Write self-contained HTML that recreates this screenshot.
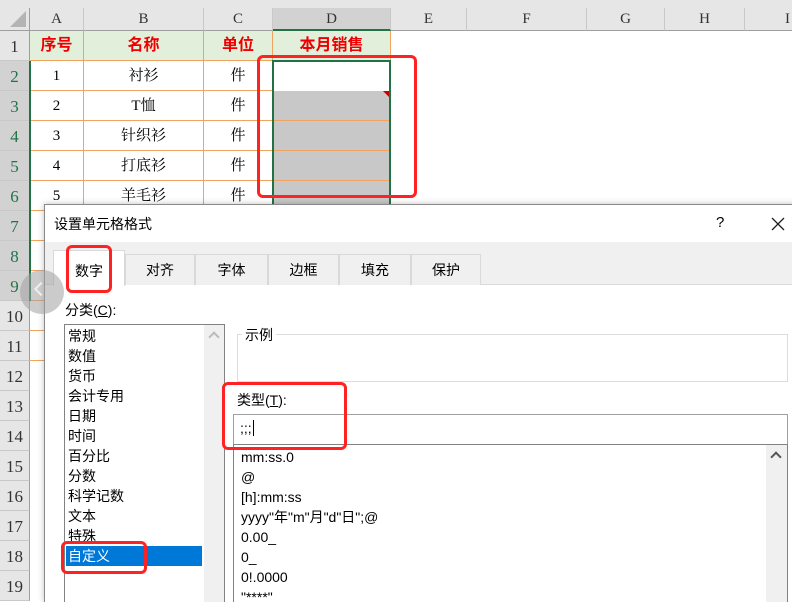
<!DOCTYPE html>
<html style="width:792px;height:602px;overflow:hidden"><head><meta charset="utf-8"><style>
*{margin:0;padding:0;box-sizing:border-box}
body{width:792px;height:602px;overflow:hidden;background:#fff;position:relative;font-family:"Liberation Sans","Noto Sans CJK SC",sans-serif;font-size:14px;color:#000}
.a{position:absolute}
.ch{top:8px;height:23px;background:#e6e6e6;border-right:1px solid #c8c8c8;border-bottom:1px solid #9e9e9e;text-align:center;font-family:"Liberation Serif","Noto Serif CJK SC",serif;font-size:15px;line-height:23px;color:#333}
.rh{left:0;width:30px;height:30px;background:#e6e6e6;border-bottom:1px solid #c8c8c8;border-right:1px solid #9e9e9e;text-align:center;font-family:"Liberation Serif",serif;font-size:17px;line-height:32px;color:#333}
.c{height:30px;border-right:1px solid #f0a45f;border-bottom:1px solid #f0a45f;text-align:center;line-height:30px;font-family:"Liberation Serif","Noto Serif CJK SC",serif;font-size:15px}
.h{background:#e2efda;color:#e00;font-weight:bold;font-size:16px;font-family:"Liberation Sans","Noto Sans CJK SC",sans-serif}
.g{background:#c8c8c8}
.red{border:3px solid #f22;border-radius:6px}
.tab{top:254px;height:31px;border:1px solid #d9d9d9;border-bottom:none;background:#f0f0f0;text-align:center;line-height:31px;font-size:14px}
.li{left:68px;font-size:14px;line-height:20px}
.ti{left:241px;font-size:14px;line-height:20px}
</style></head><body>
<div class="a" style="left:0;top:0;width:792px;height:8px;background:#e6e6e6"></div>
<div class="a" style="left:0;top:8px;width:30px;height:23px;background:#e6e6e6;border-right:1px solid #9e9e9e;border-bottom:1px solid #9e9e9e"><div class="a" style="right:3px;bottom:3px;width:0;height:0;border-left:16px solid transparent;border-bottom:16px solid #b4b4b4"></div></div>
<div class="a ch" style="left:30px;width:54px">A</div>
<div class="a ch" style="left:84px;width:120px">B</div>
<div class="a ch" style="left:204px;width:69px">C</div>
<div class="a ch" style="left:273px;width:118px;background:#d2d2d2;border-bottom:2px solid #217346">D</div>
<div class="a ch" style="left:391px;width:76px">E</div>
<div class="a ch" style="left:467px;width:120px">F</div>
<div class="a ch" style="left:587px;width:78px">G</div>
<div class="a ch" style="left:665px;width:80px">H</div>
<div class="a ch" style="left:745px;width:60px;text-align:left;padding-left:40px">I</div>

<div class="a rh" style="top:31px">1</div>
<div class="a rh" style="top:61px;background:#d2d2d2;color:#217346">2</div>
<div class="a rh" style="top:91px;background:#d2d2d2;color:#217346">3</div>
<div class="a rh" style="top:121px;background:#d2d2d2;color:#217346">4</div>
<div class="a rh" style="top:151px;background:#d2d2d2;color:#217346">5</div>
<div class="a rh" style="top:181px;background:#d2d2d2;color:#217346">6</div>
<div class="a rh" style="top:211px;background:#d2d2d2;color:#217346">7</div>
<div class="a rh" style="top:241px;background:#d2d2d2;color:#217346">8</div>
<div class="a rh" style="top:271px;background:#d2d2d2;color:#217346">9</div>
<div class="a rh" style="top:301px">10</div>
<div class="a rh" style="top:331px">11</div>
<div class="a rh" style="top:361px">12</div>
<div class="a rh" style="top:391px">13</div>
<div class="a rh" style="top:421px">14</div>
<div class="a rh" style="top:451px">15</div>
<div class="a rh" style="top:481px">16</div>
<div class="a rh" style="top:511px">17</div>
<div class="a rh" style="top:541px">18</div>
<div class="a rh" style="top:571px">19</div>

<div class="a c h" style="left:30px;top:31px;width:54px">序号</div>
<div class="a c h" style="left:84px;top:31px;width:120px">名称</div>
<div class="a c h" style="left:204px;top:31px;width:69px">单位</div>
<div class="a c h" style="left:273px;top:31px;width:118px">本月销售</div>

<div class="a c" style="left:30px;top:61px;width:54px">1</div><div class="a c" style="left:84px;top:61px;width:120px">衬衫</div><div class="a c" style="left:204px;top:61px;width:69px">件</div>
<div class="a c" style="left:30px;top:91px;width:54px">2</div><div class="a c" style="left:84px;top:91px;width:120px">T恤</div><div class="a c" style="left:204px;top:91px;width:69px">件</div>
<div class="a c" style="left:30px;top:121px;width:54px">3</div><div class="a c" style="left:84px;top:121px;width:120px">针织衫</div><div class="a c" style="left:204px;top:121px;width:69px">件</div>
<div class="a c" style="left:30px;top:151px;width:54px">4</div><div class="a c" style="left:84px;top:151px;width:120px">打底衫</div><div class="a c" style="left:204px;top:151px;width:69px">件</div>
<div class="a c" style="left:30px;top:181px;width:54px">5</div><div class="a c" style="left:84px;top:181px;width:120px">羊毛衫</div><div class="a c" style="left:204px;top:181px;width:69px">件</div>
<div class="a c" style="left:30px;top:211px;width:54px"></div><div class="a c" style="left:30px;top:241px;width:54px"></div><div class="a c" style="left:30px;top:271px;width:54px"></div><div class="a c" style="left:30px;top:301px;width:54px"></div><div class="a c" style="left:30px;top:331px;width:54px"></div>
<div class="a c g" style="left:273px;top:91px;width:118px"></div>
<div class="a c g" style="left:273px;top:121px;width:118px"></div>
<div class="a c g" style="left:273px;top:151px;width:118px"></div>
<div class="a c g" style="left:273px;top:181px;width:118px"></div>
<div class="a" style="left:383px;top:91px;border-left:7px solid transparent;border-top:7px solid #c00"></div>
<div class="a" style="left:272px;top:60px;width:119px;height:160px;border:2px solid #217346"></div>
<div class="a" style="left:29px;top:61px;width:2px;height:240px;background:#217346"></div>
<div class="a red" style="left:257px;top:55px;width:160px;height:143px"></div>

<!-- dialog -->
<div class="a" style="left:44px;top:204px;width:760px;height:398px;background:#fff;border:1px solid #8a8a8a;border-bottom:none;box-shadow:0 0 6px rgba(0,0,0,.25)"></div>
<div class="a" style="left:54px;top:214px;font-size:14px">设置单元格格式</div>
<div class="a" style="left:716px;top:214px;font-size:15px">?</div>
<svg class="a" style="left:771px;top:217px" width="14" height="14"><path d="M1 1L13 13M13 1L1 13" stroke="#222" stroke-width="1.3"/></svg>
<div class="a" style="left:45px;top:242px;width:747px;height:43px;background:#f0f0f0;border-bottom:1px solid #d9d9d9"></div>
<div class="a tab" style="left:53px;width:72px;top:250px;height:36px;background:#fff;line-height:40px">数字</div>
<div class="a tab" style="left:125px;width:70px">对齐</div>
<div class="a tab" style="left:195px;width:73px">字体</div>
<div class="a tab" style="left:268px;width:71px">边框</div>
<div class="a tab" style="left:339px;width:72px">填充</div>
<div class="a tab" style="left:411px;width:70px">保护</div>
<div class="a red" style="left:66px;top:245px;width:46px;height:48px"></div>
<div class="a" style="left:20px;top:270px;width:44px;height:44px;border-radius:50%;background:rgba(160,160,160,.55)"></div>
<div class="a" style="left:36px;top:284px;width:10px;height:10px;border-left:2px solid #eee;border-bottom:2px solid #eee;transform:rotate(45deg)"></div>

<div class="a" style="left:65px;top:300px">分类(<u>C</u>):</div>
<div class="a" style="left:64px;top:324px;width:161px;height:278px;border:1px solid #828282;border-bottom:none"></div>
<div class="a" style="left:204px;top:325px;width:20px;height:277px;background:#f0f0f0"></div>
<div class="a" style="left:210px;top:333px;width:8px;height:8px;border-left:2px solid #bbb;border-top:2px solid #bbb;transform:rotate(45deg)"></div>
<div class="a li" style="top:326px">常规</div>
<div class="a li" style="top:346px">数值</div>
<div class="a li" style="top:366px">货币</div>
<div class="a li" style="top:386px">会计专用</div>
<div class="a li" style="top:406px">日期</div>
<div class="a li" style="top:426px">时间</div>
<div class="a li" style="top:446px">百分比</div>
<div class="a li" style="top:466px">分数</div>
<div class="a li" style="top:486px">科学记数</div>
<div class="a li" style="top:506px">文本</div>
<div class="a li" style="top:526px">特殊</div>
<div class="a" style="left:66px;top:546px;width:136px;height:20px;background:#0078d7"></div>
<div class="a li" style="top:546px;color:#fff">自定义</div>
<div class="a red" style="left:61px;top:541px;width:86px;height:33px"></div>

<div class="a" style="left:237px;top:334px;width:551px;height:48px;border:1px solid #dcdcdc"></div>
<div class="a" style="left:242px;top:325px;background:#fff;padding:0 3px">示例</div>
<div class="a" style="left:237px;top:390px">类型(<u>T</u>):</div>
<div class="a" style="left:233px;top:414px;width:555px;height:31px;border:1px solid #a0a0a0"></div>
<div class="a" style="left:240px;top:420px">;;;<span style="border-left:1px solid #000;margin-left:1px"></span></div>
<div class="a" style="left:233px;top:444px;width:555px;height:158px;border:1px solid #828282;border-bottom:none"></div>
<div class="a" style="left:766px;top:445px;width:21px;height:157px;background:#f0f0f0"></div>
<div class="a" style="left:772px;top:453px;width:8px;height:8px;border-left:2px solid #555;border-top:2px solid #555;transform:rotate(45deg)"></div>
<div class="a ti" style="top:447px">mm:ss.0</div>
<div class="a ti" style="top:467px">@</div>
<div class="a ti" style="top:487px">[h]:mm:ss</div>
<div class="a ti" style="top:507px">yyyy"年"m"月"d"日";@</div>
<div class="a ti" style="top:527px">0.00_</div>
<div class="a ti" style="top:547px">0_</div>
<div class="a ti" style="top:567px">0!.0000</div>
<div class="a ti" style="top:587px;height:15px;overflow:hidden">"****"</div>
<div class="a red" style="left:222px;top:382px;width:125px;height:68px"></div>
</body></html>
